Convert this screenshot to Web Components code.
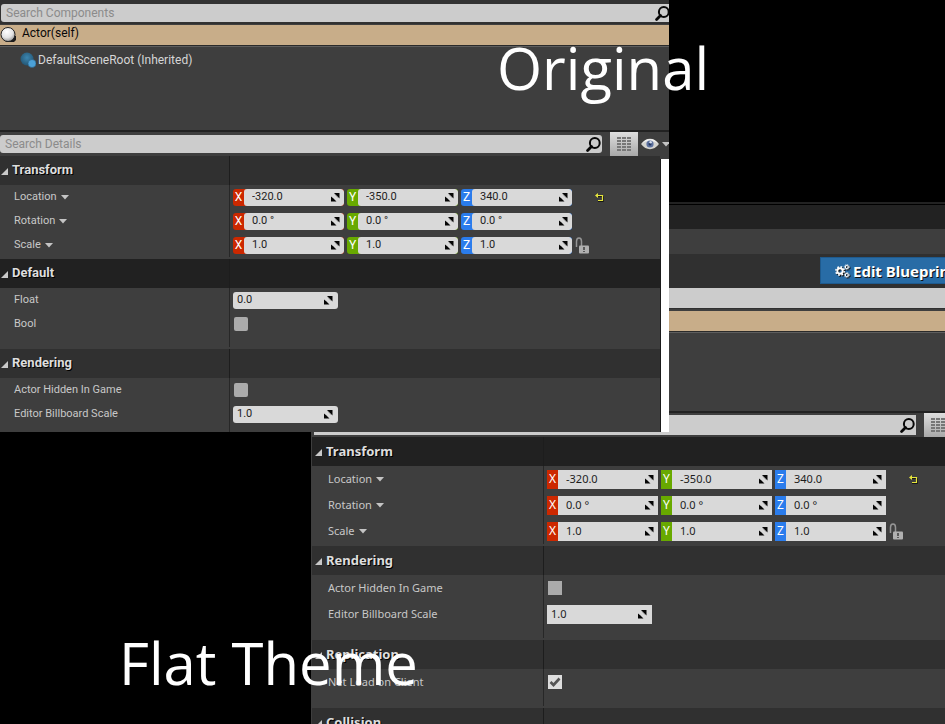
<!DOCTYPE html>
<html lang="en">
<head>
<meta charset="utf-8">
<title>Editor theme comparison</title>
<style>
  body { margin: 0; background: #000; }
</style>
</head>
<body>
<theme-comparison>
  <details-panel slot="original" theme="original">
    <search-field slot="component-search" label="Search Components"></search-field>
    <tree-row slot="tree" selected icon="actor">Actor(self)</tree-row>
    <tree-row slot="tree" icon="scene">DefaultSceneRoot (Inherited)</tree-row>
    <search-field slot="detail-search" label="Search Details"></search-field>
    <property-section heading="Transform" tight>
      <property-row label="Location" menu><vector-field label="Location" values="-320.0,-350.0,340.0" extra="reset"></vector-field></property-row>
      <property-row label="Rotation" menu><vector-field label="Rotation" values="0.0 °,0.0 °,0.0 °"></vector-field></property-row>
      <property-row label="Scale" menu><vector-field label="Scale" values="1.0,1.0,1.0" extra="lock"></vector-field></property-row>
    </property-section>
    <property-section heading="Default" dark>
      <property-row label="Float"><number-field label="Float" value="0.0"></number-field></property-row>
      <property-row label="Bool"><check-field label="Bool"></check-field></property-row>
    </property-section>
    <property-section heading="Rendering">
      <property-row label="Actor Hidden In Game"><check-field label="Actor Hidden In Game"></check-field></property-row>
      <property-row label="Editor Billboard Scale"><number-field label="Editor Billboard Scale" value="1.0"></number-field></property-row>
    </property-section>
  </details-panel>

  <details-panel slot="flat" theme="flat">
    <edit-button slot="action">Edit Blueprint</edit-button>
    <search-field slot="component-search" label="Search Components" bare></search-field>
    <tree-row slot="tree" selected></tree-row>
    <search-field slot="detail-search" label="Search Details" bare></search-field>
    <property-section heading="Transform" dark tight>
      <property-row label="Location" menu><vector-field label="Location" values="-320.0,-350.0,340.0" extra="reset"></vector-field></property-row>
      <property-row label="Rotation" menu><vector-field label="Rotation" values="0.0 °,0.0 °,0.0 °"></vector-field></property-row>
      <property-row label="Scale" menu><vector-field label="Scale" values="1.0,1.0,1.0" extra="lock"></vector-field></property-row>
    </property-section>
    <property-section heading="Rendering">
      <property-row label="Actor Hidden In Game"><check-field label="Actor Hidden In Game"></check-field></property-row>
      <property-row label="Editor Billboard Scale"><number-field label="Editor Billboard Scale" value="1.0"></number-field></property-row>
    </property-section>
    <property-section heading="Replication">
      <property-row label="Net Load on Client"><check-field label="Net Load on Client" checked></check-field></property-row>
    </property-section>
    <property-section heading="Collision"></property-section>
  </details-panel>
</theme-comparison>

<script>
const define = (name, render, after) => customElements.define(name, class extends HTMLElement {
  connectedCallback() {
    if (this.shadowRoot) return;
    this.attachShadow({ mode: 'open' }).innerHTML =
      '<style>*{box-sizing:border-box}button,input{font:inherit;color:inherit;margin:0;padding:0;border:0;background:none;outline:0}svg{display:block;flex:none}</style>' + render(this);
    if (after) after(this);
  }
});

const dragIcon = '<svg width="9" height="9" viewBox="0 0 9 9" aria-hidden="true"><path d="M3 0H8.500V5.500L6.500 3.500L5.500 2.500ZM0 3.500L2.500 5.500L5.500 8.500H0Z" fill="#050505"/><path d="M3.500 1.500L7 5" stroke="#aaa" stroke-width=".6"/></svg>';
const caret = '<svg width="8" height="5" viewBox="0 0 8 5" aria-hidden="true"><path d="M0 0H8L4 4.5Z" fill="#c4c4c4"/></svg>';

/* Stage: two overlapping panels with a caption on each */
define('theme-comparison', () => `
<style>
  :host { display: grid; position: relative; height: 100vh; overflow: hidden; background: #000;
    grid-template-columns: 311fr 358fr 276fr; grid-template-rows: 202px auto; color: #fff; }
  ::slotted([slot=original]) { grid-area: 1 / 1 / 3 / 3; align-self: start; z-index: 1; }
  ::slotted([slot=flat]) { grid-area: 2 / 2 / 3 / 4; margin-right: -38px; }
  h2 { position: absolute; z-index: 2; margin: 0; white-space: nowrap;
    font: 500 58px/80px "Open Sans", "Noto Sans", sans-serif; }
  .one { left: 497px; top: 28px; }
  .two { left: 119px; top: 623px; }
</style>
<slot name="original"></slot><slot name="flat"></slot>
<h2 class="one">Original</h2><h2 class="two">Flat Theme</h2>`);

define('details-panel', el => `
<style>
  :host { display: block; min-width: 0; overflow: hidden; background: #3e3e3e; color: #c8c8c8; }
  :host([theme=original]) { height: 432px; --name: 229px; --indent: 14px; --head-gap: 4px; --row: 24px; --field: 17px; --search: 18px; --radius: 3px; --box: 2px;
    --text: 400 11px/16px Roboto, sans-serif; --axis-text: 400 12px/16px Roboto, sans-serif; --big: 400 12px/18px Roboto, sans-serif; --head: 700 13px/18px Roboto, sans-serif; }
  :host([theme=flat]) { border-left: 1px solid #3e3e3e; --name: 231px; --indent: 16px; --head-gap: 4px; --row: 26px; --field: 19px; --search: 20px; --radius: 0px; --box: 0px;
    --text: 400 11px/16px "Noto Sans", sans-serif; --axis-text: 400 12px/16px "Noto Sans", sans-serif; --big: 400 12px/18px "Noto Sans", sans-serif; --head: 700 13px/18px "Noto Sans", sans-serif; }
  .chrome { border-top: 2px solid #222; }
  .chrome div:nth-child(1) { height: 25px; background: #222; border-top: 1px solid #000; }
  .chrome div:nth-child(2) { height: 25px; }
  .actions { display: flex; justify-content: flex-end; padding: 3px 4px; height: 34px; background: #303030; }
  .top { padding: 4px 0 2px 1px; margin-bottom: 1px; background: #323232; border-bottom: 1px solid #303030; }
  :host([theme=original]) .top { padding-bottom: 1px; margin-right: -2px; }
  :host([theme=flat]) .top { padding: 0 0 0 2px; margin-bottom: 2px; }
  .tree { height: 107px; border-bottom: 2px solid #222; }
  :host([theme=flat]) .tree { height: 102px; }
  .tools { display: grid; grid-template-columns: minmax(0, 1fr) 28px 31px; height: 24px; align-items: center; }
  .tools slot { display: block; margin-right: 8px; }
  :host([theme=flat]) .tools slot { margin-left: 2px; }
  .tools button { height: 24px; display: grid; place-items: center; }
  .list { background: linear-gradient(#dedede, #a8a8a8); }
  .eye { display: flex !important; align-items: center; padding-left: 3px !important; gap: 3px; }
  .body { display: flex; }
  .sections { flex: 1; min-width: 0; }
  :host([theme=flat]) .sections { --head-left: 3px; }
  .bar { width: 9px; margin-top: 3px; background: #fff; border-left: 1px solid #1b1b1b; }
</style>
${el.getAttribute('theme') === 'flat' ? '<div class="chrome"><div></div><div></div></div><div class="actions"><slot name="action"></slot></div>' : ''}
<div class="top"><slot name="component-search"></slot></div>
<div class="tree"><slot name="tree"></slot></div>
<div class="tools"><slot name="detail-search"></slot>
  <button class="list" aria-label="Property matrix"><svg width="14" height="14" viewBox="0 0 14 14"><path d="M0 0H4V2H0ZM5 0H9V2H5ZM10 0H14V2H10ZM0 3H4V5H0ZM5 3H9V5H5ZM10 3H14V5H10ZM0 6H4V8H0ZM5 6H9V8H5ZM10 6H14V8H10ZM0 9H4V11H0ZM5 9H9V11H5ZM10 9H14V11H10ZM0 12H4V14H0ZM5 12H9V14H5ZM10 12H14V14H10Z" fill="#777"/></svg></button>
  <button class="eye" aria-label="View options"><svg width="18" height="12" viewBox="0 0 18 12"><path d="M0 6Q4 .8 9 .8T18 6Q14 11.2 9 11.2T0 6Z" fill="#d3d3cf"/><path d="M1 5.400Q4.500 1 9 1T17 5.400Q13.500 3 9 3T1 5.400Z" fill="#f1f1f1"/><circle cx="9" cy="6" r="3.600" fill="#5c719f"/><circle cx="9" cy="6" r="1.500" fill="#24375f"/><circle cx="9.600" cy="4.200" r="1.200" fill="#d4ddec"/></svg>${caret}</button>
</div>
<div class="body"><div class="sections"><slot></slot></div>${el.getAttribute('theme') === 'original' ? '<div class="bar"></div>' : ''}</div>`);

define('search-field', el => `
<style>
  :host { display: block; }
  label { display: flex; align-items: center; height: var(--search); padding: 0 1px 0 5px; background: #ccc; border-radius: var(--radius); color: #222; }
  input { flex: 1; min-width: 0; height: 100%; font: var(--big); }
  input::placeholder { color: #8b8b8b; opacity: 1; }
</style>
<label><input type="text" aria-label="${el.getAttribute('label')}" ${el.hasAttribute('bare') ? '' : `placeholder="${el.getAttribute('label')}"`}>
<svg width="15" height="15" viewBox="0 0 15 15" aria-hidden="true"><circle cx="8.800" cy="6" r="4.900" fill="none" stroke="#080808" stroke-width="2"/><path d="M5.500 9.500L1.600 13.400" stroke="#080808" stroke-width="2.800" stroke-linecap="round"/></svg></label>`);

define('tree-row', el => `
<style>
  :host { display: block; color: #d6d6d6; }
  button { display: flex; align-items: center; gap: 2px; width: 100%; height: 26px; padding-left: 20px; font: var(--big); text-align: left; }
  :host([selected]) { color: #080808; border-bottom: 1px solid #5e5e5e; }
  :host([selected]) button { gap: 6px; height: 21px; padding: 0 0 4px 0; background: #c8ad89; border-bottom: 1px solid #2a2a2a; }
  :host([selected]) svg { margin-top: 4px; }
</style>
<button>${el.getAttribute('icon') === 'actor' ? `<svg width="16" height="16" viewBox="0 0 16 16" aria-hidden="true"><defs><radialGradient id="g" cx=".42" cy=".3" r=".7"><stop offset="0" stop-color="#fff"/><stop offset=".6" stop-color="#e4e4e4"/><stop offset="1" stop-color="#9a9a9a"/></radialGradient></defs><path d="M5 15L14 9H16V13L14 15Z" fill="#1b1b1b"/><circle cx="8" cy="7.500" r="7" fill="url(#g)" stroke="#222"/></svg>`
: el.getAttribute('icon') === 'scene' ? `<svg width="16" height="16" viewBox="0 0 16 16" aria-hidden="true"><defs><radialGradient id="s" cx=".5" cy=".4" r=".6"><stop offset="0" stop-color="#3d86b0"/><stop offset="1" stop-color="#235674"/></radialGradient></defs><circle cx="7" cy="7" r="6.500" fill="url(#s)"/><circle cx="12" cy="11.500" r="4" fill="#4ba0d6" stroke="#2c5e80" stroke-width=".6"/></svg>` : ''}<slot></slot></button>`,
el => { if (!el.textContent) el.shadowRoot.querySelector('button').setAttribute('aria-label', 'Selected actor'); });

define('edit-button', () => `
<style>
  :host { display: block; }
  button { display: flex; align-items: center; gap: 3px; width: 159px; height: 27px; padding: 0 14px; background: #286ca6; border: 1px solid #1e5a8e;
    color: #fff; font: 700 15px/20px "Noto Sans", sans-serif; text-shadow: 1px 1px 0 #111; white-space: nowrap; }
  svg { filter: drop-shadow(1px 1px 0 #111); }
</style>
<button><svg width="15" height="14" viewBox="0 0 15 14" fill="none" stroke="#fff" aria-hidden="true"><circle cx="5" cy="7" r="2.700" stroke-width="1.900"/><circle cx="5" cy="7" r="4.200" stroke-width="1.500" stroke-dasharray="1.700 1.600"/><circle cx="11.800" cy="3" r="1.500" stroke-width="1.200"/><circle cx="11.800" cy="3" r="2.500" stroke-width=".8" stroke-dasharray="1 1"/><circle cx="11.800" cy="11" r="1.500" stroke-width="1.200"/><circle cx="11.800" cy="11" r="2.500" stroke-width=".8" stroke-dasharray="1 1"/></svg><slot></slot></button>`);

define('property-section', el => `
<style>
  :host { display: block; --head-bg: #303030; }
  :host([dark]) { --head-bg: #212121; }
  h3 { display: flex; margin: 0; height: 29px; background: var(--head-bg); }
  button { display: flex; align-items: center; gap: 4px; width: var(--name); padding: 0 0 1px var(--head-left, 1px); font: var(--head); color: #dedede; text-shadow: 1px 1px 0 #000; }
  svg { margin-top: 3px; }
  h3::after { content: ""; border-left: 1px solid #1d1d1d; }
  .rows { padding-bottom: 13px; background: linear-gradient(to right, transparent var(--name), #272727 var(--name), #272727 calc(var(--name) + 1px), transparent 0) 0 0 / 100% calc(100% - 2px) no-repeat; }
  :host([tight]) .rows { padding-bottom: 2px; }
</style>
<h3><button aria-expanded="true"><svg width="7" height="7" viewBox="0 0 7 7" aria-hidden="true"><path d="M7 0V7H0Z" fill="#c9c9c9"/></svg>${el.getAttribute('heading')}</button></h3>
<div class="rows"><slot></slot></div>`);

define('property-row', el => `
<style>
  :host { display: grid; grid-template-columns: var(--name) minmax(0, 1fr); align-items: center; height: var(--row); font: var(--text); }
  .name { display: flex; align-items: center; gap: 4px; padding-left: var(--indent); white-space: nowrap; }
  slot { display: block; padding-left: 4px; }
</style>
${el.hasAttribute('menu') ? `<button class="name">${el.getAttribute('label')}${caret}</button>` : `<span class="name">${el.getAttribute('label')}</span>`}<slot></slot>`);

define('number-field', el => `
<style>
  :host { display: block; width: 105px; }
  label { display: flex; align-items: center; height: var(--field); padding: 0 5px 0 4px; background: #d9d9d9; border-radius: var(--radius); color: #1c1c1c; }
  input { flex: 1; min-width: 0; font: var(--text); }
</style>
<label><input type="text" aria-label="${el.getAttribute('label')}" value="${el.getAttribute('value')}">${dragIcon}</label>`);

define('vector-field', el => `
<style>
  :host { display: flex; align-items: center; gap: 3px; }
  label { display: flex; align-items: center; width: 111px; height: var(--field); background: var(--axis); border-radius: var(--radius); color: #fff; overflow: hidden; }
  .axis { width: 11px; text-align: center; font: var(--axis-text); }
  .entry { flex: 1; min-width: 0; display: flex; align-items: center; height: 100%; padding: 0 4px 0 8px; background: #d9d9d9; border-radius: var(--radius); color: #1c1c1c; }
  input { flex: 1; min-width: 0; font: var(--text); }
  .reset { margin-left: 20px; }
</style>
${el.getAttribute('values').split(',').map((v, i) => `<label style="--axis:${['#cc2800', '#68a900', '#2a7cec'][i]}"><span class="axis">${'XYZ'[i]}</span><span class="entry"><input type="text" aria-label="${el.getAttribute('label')} ${'XYZ'[i]}" value="${v}">${dragIcon}</span></label>`).join('')}
${el.getAttribute('extra') === 'reset' ? `<button class="reset" aria-label="Reset to default"><svg width="9" height="9" viewBox="0 0 9 9"><path d="M2 3.500H8.500V8.500H3" fill="none" stroke="#161616"/><path d="M1 2.500H7.500V7.500H3" fill="none" stroke="#e5e53c" stroke-width="1.200"/><path d="M0 2.500L3 0V5Z" fill="#e5e53c"/></svg></button>` : ''}
${el.getAttribute('extra') === 'lock' ? `<button aria-label="Lock scale"><svg width="14" height="17" viewBox="0 0 14 17"><path d="M1.500 10V4.500Q1.500 1 4 1T6.500 4.500V9" fill="none" stroke="#969696" stroke-width="1.500"/><rect x="4" y="8.500" width="10" height="8" rx="1" fill="#b0b0b0"/><path d="M9 10V13M9 14V15" stroke="#444" stroke-width="1.600"/></svg></button>` : ''}`);

define('check-field', el => `
<style>
  :host { display: block; padding-left: 1px; }
  label { display: grid; width: 14px; height: 14px; }
  input, svg { grid-area: 1 / 1; }
  input { appearance: none; width: 14px; height: 14px; background: #ababab; border-radius: var(--box); }
  input:checked { background: #dedede; }
  svg { visibility: hidden; pointer-events: none; }
  input:checked + svg { visibility: visible; }
</style>
<label><input type="checkbox" aria-label="${el.getAttribute('label')}" ${el.hasAttribute('checked') ? 'checked' : ''}><svg width="14" height="14" viewBox="0 0 14 14" aria-hidden="true"><path d="M2.500 7L5.500 10L11.500 3.500" fill="none" stroke="#555" stroke-width="2.600"/></svg></label>`);
</script>
</body>
</html>
